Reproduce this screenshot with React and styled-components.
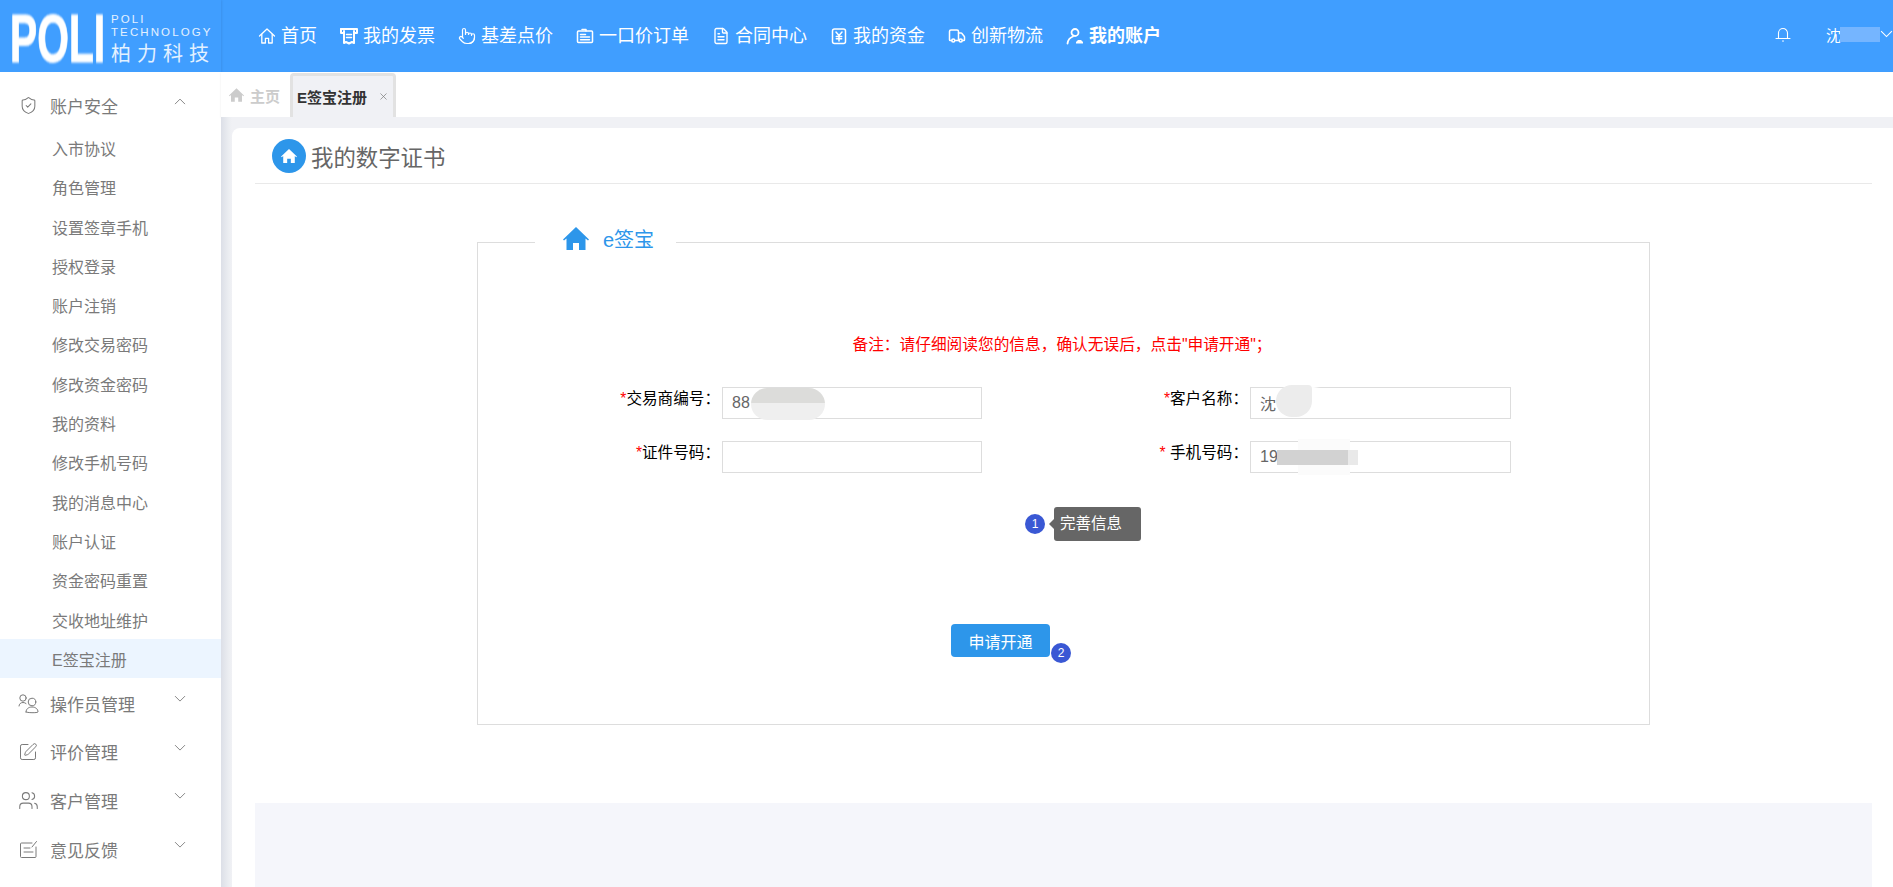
import React from 'react';
import styled, { createGlobalStyle } from 'styled-components';
import { FileText, Pointer, ShieldCheck, SquarePen, Truck, Users, X } from 'lucide-react';

const FONT = `"Liberation Sans", "Noto Sans CJK SC", sans-serif`;

const GlobalStyle = createGlobalStyle`
  html, body { margin: 0; padding: 0; height: 100%; overflow: hidden; background: #fff; }
  #root { height: 100%; }
  * { box-sizing: border-box; }
  body { font-family: ${FONT}; }
`;

// --- Layout ---
const Page = styled.div`
  display: flex;
  flex-direction: column;
  height: 100vh;
`;

const Header = styled.header`
  display: flex;
  align-items: center;
  flex: 0 0 72px;
  background: #409eff;
  color: #fff;
`;

const Logo = styled.div`
  display: flex;
  flex: 0 0 221px;
  height: 72px;
  padding: 13px 0 0 10px;
  box-shadow: 1px 0 2px rgba(0, 0, 0, 0.08);
`;

const LogoMark = styled.div`
  flex: 0 0 101px;
  width: 101px;
  min-width: 0;
  height: 50px;
  font: bold 68px/50px "Liberation Sans", sans-serif;
  -webkit-text-stroke: 1px #fff;
  color: #fff;
  filter: blur(1px);
  transform: scaleX(0.6);
  transform-origin: left center;
  white-space: nowrap;
`;

const LogoText = styled.div`
  display: flex;
  flex-direction: column;
  color: #e3f1ff;
`;

const LogoLatin = styled.div`
  font-size: 11.5px;
  line-height: 13px;
  letter-spacing: 2.1px;
  white-space: nowrap;
`;

const LogoCn = styled.div`
  margin-top: 3px;
  font-size: 20px;
  line-height: 24px;
  letter-spacing: 6px;
  white-space: nowrap;
`;

const Nav = styled.nav`
  display: flex;
  align-items: center;
  gap: 23px;
  margin-left: 37px;
`;

const NavItem = styled.a`
  display: flex;
  align-items: center;
  gap: 5px;
  font-size: 18px;
  line-height: 24px;
  font-weight: ${(p) => (p.$active ? 'bold' : 'normal')};
  color: #fff;
  white-space: nowrap;
  svg { flex: 0 0 18px; width: 18px; height: 18px; }
`;

const UserBar = styled.div`
  display: flex;
  align-items: center;
  margin-left: auto;
  padding-bottom: 4px;
`;

const UserName = styled.div`
  display: flex;
  align-items: center;
  width: 54px;
  margin-left: 35px;
  font-size: 15px;
`;

const NameMask = styled.span`
  display: block;
  width: 43px;
  height: 15px;
  margin-left: -1px;
  background: #75b5ff;
`;

const Body = styled.div`
  display: flex;
  flex: 1;
  min-height: 0;
`;

// --- Sidebar ---
const Sidebar = styled.aside`
  flex: 0 0 221px;
  padding-top: 9.5px;
  background: #fff;
  color: #7a7a7a;
`;

const MenuHead = styled.div`
  display: flex;
  align-items: center;
  height: 48.7px;
  padding: 0 35px 0 ${(p) => p.$pad}px;
  font-size: 17px;
  svg.icon { flex: 0 0 auto; margin-right: ${(p) => p.$gap}px; }
  svg.chevron { margin: -9px 0 0 auto; }
`;

const SubMenu = styled.div`
  margin-top: -2.2px;
  padding-bottom: 0.7px;
`;

const SubItem = styled.div`
  height: 39.3px;
  padding-left: 52px;
  font-size: 16px;
  line-height: 43.6px;
  background: ${(p) => (p.$active ? '#ecf5ff' : 'transparent')};
`;

// --- Main column ---
const Main = styled.main`
  display: flex;
  flex-direction: column;
  flex: 1;
  min-width: 0;
`;

const TabBar = styled.div`
  display: flex;
  align-items: flex-end;
  flex: 0 0 45px;
  padding-left: 8px;
  background: #fff;
  box-shadow: 0 1px 2px rgba(0, 0, 0, 0.08);
`;

const HomeTab = styled.div`
  display: flex;
  align-items: center;
  gap: 6px;
  width: 61px;
  height: 44px;
  font-size: 15px;
  font-weight: bold;
  color: #ccc;
`;

const ActiveTab = styled.div`
  display: flex;
  align-items: center;
  width: 106px;
  height: 44px;
  padding-left: 4px;
  border: 3px solid #e2e2e2;
  border-bottom: 0;
  border-radius: 4px 4px 0 0;
  background: #f0f1f5;
  font-size: 15px;
  font-weight: bold;
  color: #333;
  svg { margin-left: 11px; color: #777; }
`;

const Content = styled.div`
  display: flex;
  flex: 1;
  min-height: 0;
  padding: 11px 0 0 11px;
  background: linear-gradient(to right, #dcdfe7, #eceef2 8px, #f0f1f5 11px);
`;

const Card = styled.section`
  display: flex;
  flex-direction: column;
  flex: 1;
  padding: 0 21px 0 23px;
  border-radius: 8px 0 0 0;
  background: #fff;
`;

const TitleRow = styled.div`
  display: flex;
  align-items: center;
  gap: 5px;
  flex: 0 0 56px;
  padding-left: 17px;
  border-bottom: 1px solid #e9e9e9;
  font-size: 22.4px;
  color: #666;
`;

const TitleIcon = styled.span`
  display: flex;
  align-items: center;
  justify-content: center;
  width: 34px;
  height: 34px;
  border-radius: 50%;
  background: #2d96ea;
  color: #fff;
`;

const Box = styled.fieldset`
  position: relative;
  width: 1173px;
  height: 497px;
  margin: 44px 0 0 222px;
  padding: 77px 0 0 15px;
  border: 1.5px solid #ddd;
  min-width: 0;
`;

const BoxLegend = styled.legend`
  display: flex;
  align-items: center;
  gap: 14px;
  height: 28px;
  margin-left: 42px;
  padding: 0 22px 8px 28px;
  font-size: 20px;
  color: #2d96ea;
`;

const Note = styled.div`
  margin-right: 18px;
  font-size: 15.7px;
  line-height: 24px;
  text-align: center;
  color: #f00;
`;

const FormGrid = styled.div`
  display: grid;
  grid-template-columns: 229px 260px 268px 261px;
  grid-auto-rows: 32px;
  row-gap: 22px;
  margin-top: 30px;
`;

const Label = styled.label`
  padding: 0 2px 10px 0;
  font-size: 15.6px;
  line-height: 24px;
  text-align: right;
  color: #000;
  white-space: pre;
  b { font-weight: normal; color: #f00; }
`;

const InputWrap = styled.div`
  position: relative;
`;

const Input = styled.input`
  width: 100%;
  height: 32px;
  padding: 0 9px;
  border: 1.5px solid #ddd;
  outline: none;
  font: 16px ${FONT};
  color: #666;
`;

const Mask = styled.span`
  position: absolute;
  display: block;
`;

const IdMask = styled(Mask)`
  left: 29px;
  top: 1px;
  width: 74px;
  height: 32px;
  border-radius: 16px;
  background: linear-gradient(to bottom, #dcdcda 0 48%, #efefef 48% 100%);
`;

const CustomerMask = styled(Mask)`
  left: 26px;
  top: -2px;
  width: 36px;
  height: 32px;
  border-radius: 16px 4px 16px 16px;
  background: #ececec;
  box-shadow: 5px -2px 4px #fff;
`;

const PhoneHaze = styled(Mask)`
  left: 48px;
  top: -2px;
  width: 52px;
  height: 36px;
  background: #fbfbfb;
`;

const PhoneMask = styled(Mask)`
  left: 27px;
  top: 9px;
  width: 81px;
  height: 15px;
  background: linear-gradient(to right, #d2d2d2 0 88%, #e9e9e9 88% 100%);
`;

const StepRow = styled.div`
  display: flex;
  align-items: center;
  margin: 34px 0 0 532px;
`;

const StepDot = styled.span`
  display: flex;
  align-items: center;
  justify-content: center;
  flex: 0 0 20px;
  width: 20px;
  height: 20px;
  border-radius: 50%;
  background: #3a58d4;
  font-size: 12px;
  color: #fff;
`;

const Tip = styled.div`
  position: relative;
  width: 87px;
  height: 34px;
  margin-left: 9px;
  padding-left: 6px;
  border-radius: 3px;
  background: #666;
  font-size: 15.5px;
  line-height: 34px;
  color: #fff;
  &::before {
    content: '';
    position: absolute;
    left: -5px;
    top: 12px;
    border: 5px solid transparent;
    border-left: 0;
    border-right-color: #666;
  }
`;

const ApplyButton = styled.button`
  position: relative;
  display: block;
  width: 99px;
  height: 33px;
  margin: 83px 0 0 458px;
  padding: 0;
  border: 0;
  border-radius: 4px;
  background: #2d96ea;
  font: 16px ${FONT};
  color: #fff;
`;

const ButtonDot = styled(StepDot)`
  position: absolute;
  left: 100px;
  top: 19px;
`;

const BottomPanel = styled.div`
  flex: 1;
  margin-top: 78px;
  background: #f5f6fb;
`;

// --- Icons drawn by hand (the packages have no match) ---
const Svg = ({ children, size = 18, ...rest }) => (
  <svg width={size} height={size} viewBox="0 0 18 18" fill="none" stroke="currentColor" strokeWidth="1.3" strokeLinejoin="round" strokeLinecap="round" {...rest}>
    {children}
  </svg>
);

const HomeSolid = ({ width, height }) => (
  <svg width={width} height={height} viewBox="0 0 26 23" fill="currentColor">
    <path d="M13 0 0 12.500l1 1L3.500 11.500V23h6.500v-7h6v7h6.500V11.500l2.500 2 1-1z" />
  </svg>
);

const HomeLine = () => (
  <Svg>
    <path d="M1.500 9 9 2l7.500 7" />
    <path d="M3.800 7.500V16h3.600v-4.600h3.200V16h3.600V7.500" />
  </Svg>
);

const InvoiceIcon = () => (
  <Svg strokeWidth="2">
    <path d="M1 2h16v4h-2" />
    <path d="M1 2v4h2" />
    <path d="M4 4v12l2-1 3 1.500 3-1.500 2 1V4" />
    <path d="M6.500 7.500h5M6.500 10.500h5" strokeWidth="1.500" />
  </Svg>
);

const BadgeIcon = () => (
  <Svg strokeWidth="1.500">
    <rect x="1.500" y="4" width="15" height="11.500" rx="1" />
    <path d="M6 2.500h4V4M4.500 7.500h5M4.500 10h9M4.500 12.800h9" />
  </Svg>
);

const YenIcon = () => (
  <Svg strokeWidth="1.500">
    <rect x="2.500" y="2" width="13" height="14.500" rx="2" />
    <path d="m6 5 3 3.500L12 5M9 8.500V14M6.300 9.500h5.400M6.300 11.800h5.400" />
  </Svg>
);

const AccountIcon = () => (
  <Svg strokeWidth="1.800">
    <circle cx="9" cy="5.500" r="3.500" />
    <path d="M1.500 16.500C2 13 4 10.500 7 9.500" />
    <path d="M10 16.500h7v-1.500l-2-2h-3l-2 2z" fill="currentColor" stroke="none" />
  </Svg>
);

const BellIcon = () => (
  <Svg size={16} viewBox="0 0 16 16" strokeWidth="1.100">
    <path d="M3.500 12.500V7a4.500 4.500 0 0 1 9 0v5.500" />
    <path d="M1 12.500h14M7.500 15h1" />
  </Svg>
);

const TwoPeople = (props) => (
  <Svg size={21} viewBox="0 0 21 21" strokeWidth="1" {...props}>
    <circle cx="5" cy="5" r="3.200" />
    <path d="M1 13c0-2 1.800-3.500 4-3.500 1.200 0 2.200.4 3 1" />
    <circle cx="14" cy="9" r="3.800" />
    <path d="M8 19c0-3 2.500-5 6-5s6 2 6 5c0 1-12 1-12 0z" />
  </Svg>
);

const FeedbackIcon = (props) => (
  <Svg size={19} viewBox="0 0 19 19" strokeWidth="1" {...props}>
    <path d="M13 3H2.500a1 1 0 0 0-1 1v12.500a1 1 0 0 0 1 1H16a1 1 0 0 0 1-1V7" />
    <path d="M5 8h6M5 12h9M13 7l4.500-5.500" />
  </Svg>
);

const Chevron = ({ up, size = 12, color = '#888' }) => (
  <svg className="chevron" width={size} height={size * 0.6} viewBox="0 0 12 7" fill="none" stroke={color} strokeWidth="1">
    <path d={up ? 'M1 6l5-5 5 5' : 'M1 1l5 5 5-5'} />
  </svg>
);

const navItems = [
  { label: '首页', icon: <HomeLine /> },
  { label: '我的发票', icon: <InvoiceIcon /> },
  { label: '基差点价', icon: <Pointer strokeWidth={1.6} /> },
  { label: '一口价订单', icon: <BadgeIcon /> },
  { label: '合同中心', icon: <FileText strokeWidth={1.8} /> },
  { label: '我的资金', icon: <YenIcon /> },
  { label: '创新物流', icon: <Truck strokeWidth={2} /> },
  { label: '我的账户', icon: <AccountIcon />, active: true },
];

const subItems = [
  '入市协议', '角色管理', '设置签章手机', '授权登录', '账户注销', '修改交易密码', '修改资金密码',
  '我的资料', '修改手机号码', '我的消息中心', '账户认证', '资金密码重置', '交收地址维护',
];

const App = () => (
  <Page>
    <GlobalStyle />
    <Header>
      <Logo>
        <LogoMark>POLI</LogoMark>
        <LogoText>
          <LogoLatin>POLI</LogoLatin>
          <LogoLatin>TECHNOLOGY</LogoLatin>
          <LogoCn>柏力科技</LogoCn>
        </LogoText>
      </Logo>
      <Nav>
        {navItems.map((item) => (
          <NavItem key={item.label} $active={item.active}>
            {item.icon}
            {item.label}
          </NavItem>
        ))}
      </Nav>
      <UserBar>
        <BellIcon />
        <UserName>
          沈<NameMask />
        </UserName>
        <Chevron size={13} color="#fff" />
      </UserBar>
    </Header>
    <Body>
      <Sidebar>
        <MenuHead $pad={19} $gap={12}>
          <ShieldCheck className="icon" size={19} strokeWidth={1.3} />
          账户安全
          <Chevron up />
        </MenuHead>
        <SubMenu>
          {subItems.map((label) => (
            <SubItem key={label}>{label}</SubItem>
          ))}
          <SubItem $active>E签宝注册</SubItem>
        </SubMenu>
        <MenuHead $pad={18} $gap={11}>
          <TwoPeople className="icon" />
          操作员管理
          <Chevron />
        </MenuHead>
        <MenuHead $pad={18} $gap={12}>
          <SquarePen className="icon" size={20} strokeWidth={1.2} />
          评价管理
          <Chevron />
        </MenuHead>
        <MenuHead $pad={18} $gap={11}>
          <Users className="icon" size={21} strokeWidth={1.2} />
          客户管理
          <Chevron />
        </MenuHead>
        <MenuHead $pad={19} $gap={12}>
          <FeedbackIcon className="icon" />
          意见反馈
          <Chevron />
        </MenuHead>
      </Sidebar>
      <Main>
        <TabBar>
          <HomeTab>
            <HomeSolid width={15} height={14} />
            主页
          </HomeTab>
          <ActiveTab>
            E签宝注册
            <X size={11} strokeWidth={1.5} />
          </ActiveTab>
        </TabBar>
        <Content>
          <Card>
            <TitleRow>
              <TitleIcon>
                <HomeSolid width={16} height={14} />
              </TitleIcon>
              我的数字证书
            </TitleRow>
            <Box>
              <BoxLegend>
                <HomeSolid width={26} height={23} />
                e签宝
              </BoxLegend>
              <Note>备注：请仔细阅读您的信息，确认无误后，点击"申请开通"；</Note>
              <FormGrid>
                <Label><b>*</b>交易商编号：</Label>
                <InputWrap>
                  <Input readOnly value="88" />
                  <IdMask />
                </InputWrap>
                <Label><b>*</b>客户名称：</Label>
                <InputWrap>
                  <Input readOnly value="沈" />
                  <CustomerMask />
                </InputWrap>
                <Label><b>*</b>证件号码：</Label>
                <InputWrap>
                  <Input readOnly />
                </InputWrap>
                <Label><b>* </b>手机号码：</Label>
                <InputWrap>
                  <Input readOnly value="19" />
                  <PhoneHaze />
                  <PhoneMask />
                </InputWrap>
              </FormGrid>
              <StepRow>
                <StepDot>1</StepDot>
                <Tip>完善信息</Tip>
              </StepRow>
              <ApplyButton>
                申请开通
                <ButtonDot>2</ButtonDot>
              </ApplyButton>
            </Box>
            <BottomPanel />
          </Card>
        </Content>
      </Main>
    </Body>
  </Page>
);

export default App;
